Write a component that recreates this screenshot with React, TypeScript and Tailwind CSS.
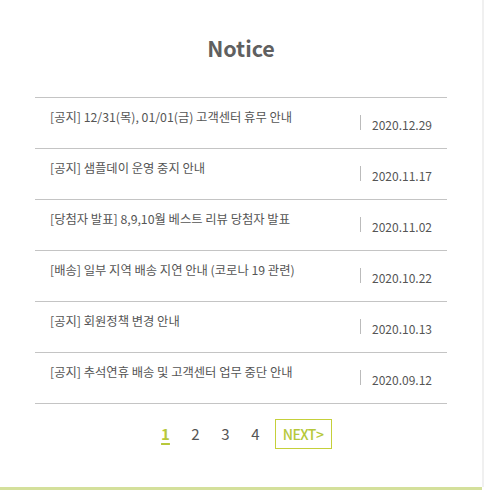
const notices = [
  { title: "[공지] 12/31(목), 01/01(금) 고객센터 휴무 안내", date: "2020.12.29" },
  { title: "[공지] 샘플데이 운영 중지 안내", date: "2020.11.17" },
  { title: "[당첨자 발표] 8,9,10월 베스트 리뷰 당첨자 발표", date: "2020.11.02" },
  { title: "[배송] 일부 지역 배송 지연 안내 (코로나 19 관련)", date: "2020.10.22" },
  { title: "[공지] 회원정책 변경 안내", date: "2020.10.13" },
  { title: "[공지] 추석연휴 배송 및 고객센터 업무 중단 안내", date: "2020.09.12" },
];

export default function App() {
  return (
    <div
      className="w-[484px] h-[490px] bg-white flex flex-col"
      style={{ fontFamily: '"Noto Sans CJK KR", "Noto Sans", sans-serif' }}
    >
      <div className="flex-1 flex border-r-2 border-[#f0f0f0]">
        <div className="flex-1 flex flex-col px-[35px]">
          <h2 className="text-center text-[21.5px] font-bold text-[#606060] leading-[30px] mt-[33px] mb-[34px]">
            Notice
          </h2>

          <ul className="border-t border-[#c4c4c4]">
            {notices.map((n) => (
              <li
                key={n.date}
                className="h-[51px] border-b border-[#c4c4c4] flex justify-between"
              >
                <span className="pl-[15px] pt-[10px] text-[12.3px] leading-[18px] text-[#555]">
                  {n.title}
                </span>
                <div className="flex items-center pr-[15px] mt-[17px] h-[15px]">
                  <span className="w-px h-[15px] bg-[#bbb] mr-[11px]" />
                  <span className="text-[12px] text-[#555] leading-[15px] mt-[4px]">
                    {n.date}
                  </span>
                </div>
              </li>
            ))}
          </ul>

          <div className="flex justify-center items-center mt-[15px] text-[15px] text-[#555]">
            <span className="w-[30px] text-center font-bold text-[#b8c83a] underline underline-offset-[3px] decoration-2">
              1
            </span>
            <span className="w-[30px] text-center">2</span>
            <span className="w-[30px] text-center">3</span>
            <span className="w-[30px] text-center">4</span>
            <span className="ml-[4px] w-[57px] h-[30px] border-[1.5px] border-[#c5d03a] flex items-center justify-center text-[14px] font-medium text-[#b5c83a] tracking-[-0.5px]">
              NEXT&gt;
            </span>
          </div>
        </div>
      </div>
      <div className="h-[3px] w-[482px] bg-[#d4e09b]" />
    </div>
  );
}
